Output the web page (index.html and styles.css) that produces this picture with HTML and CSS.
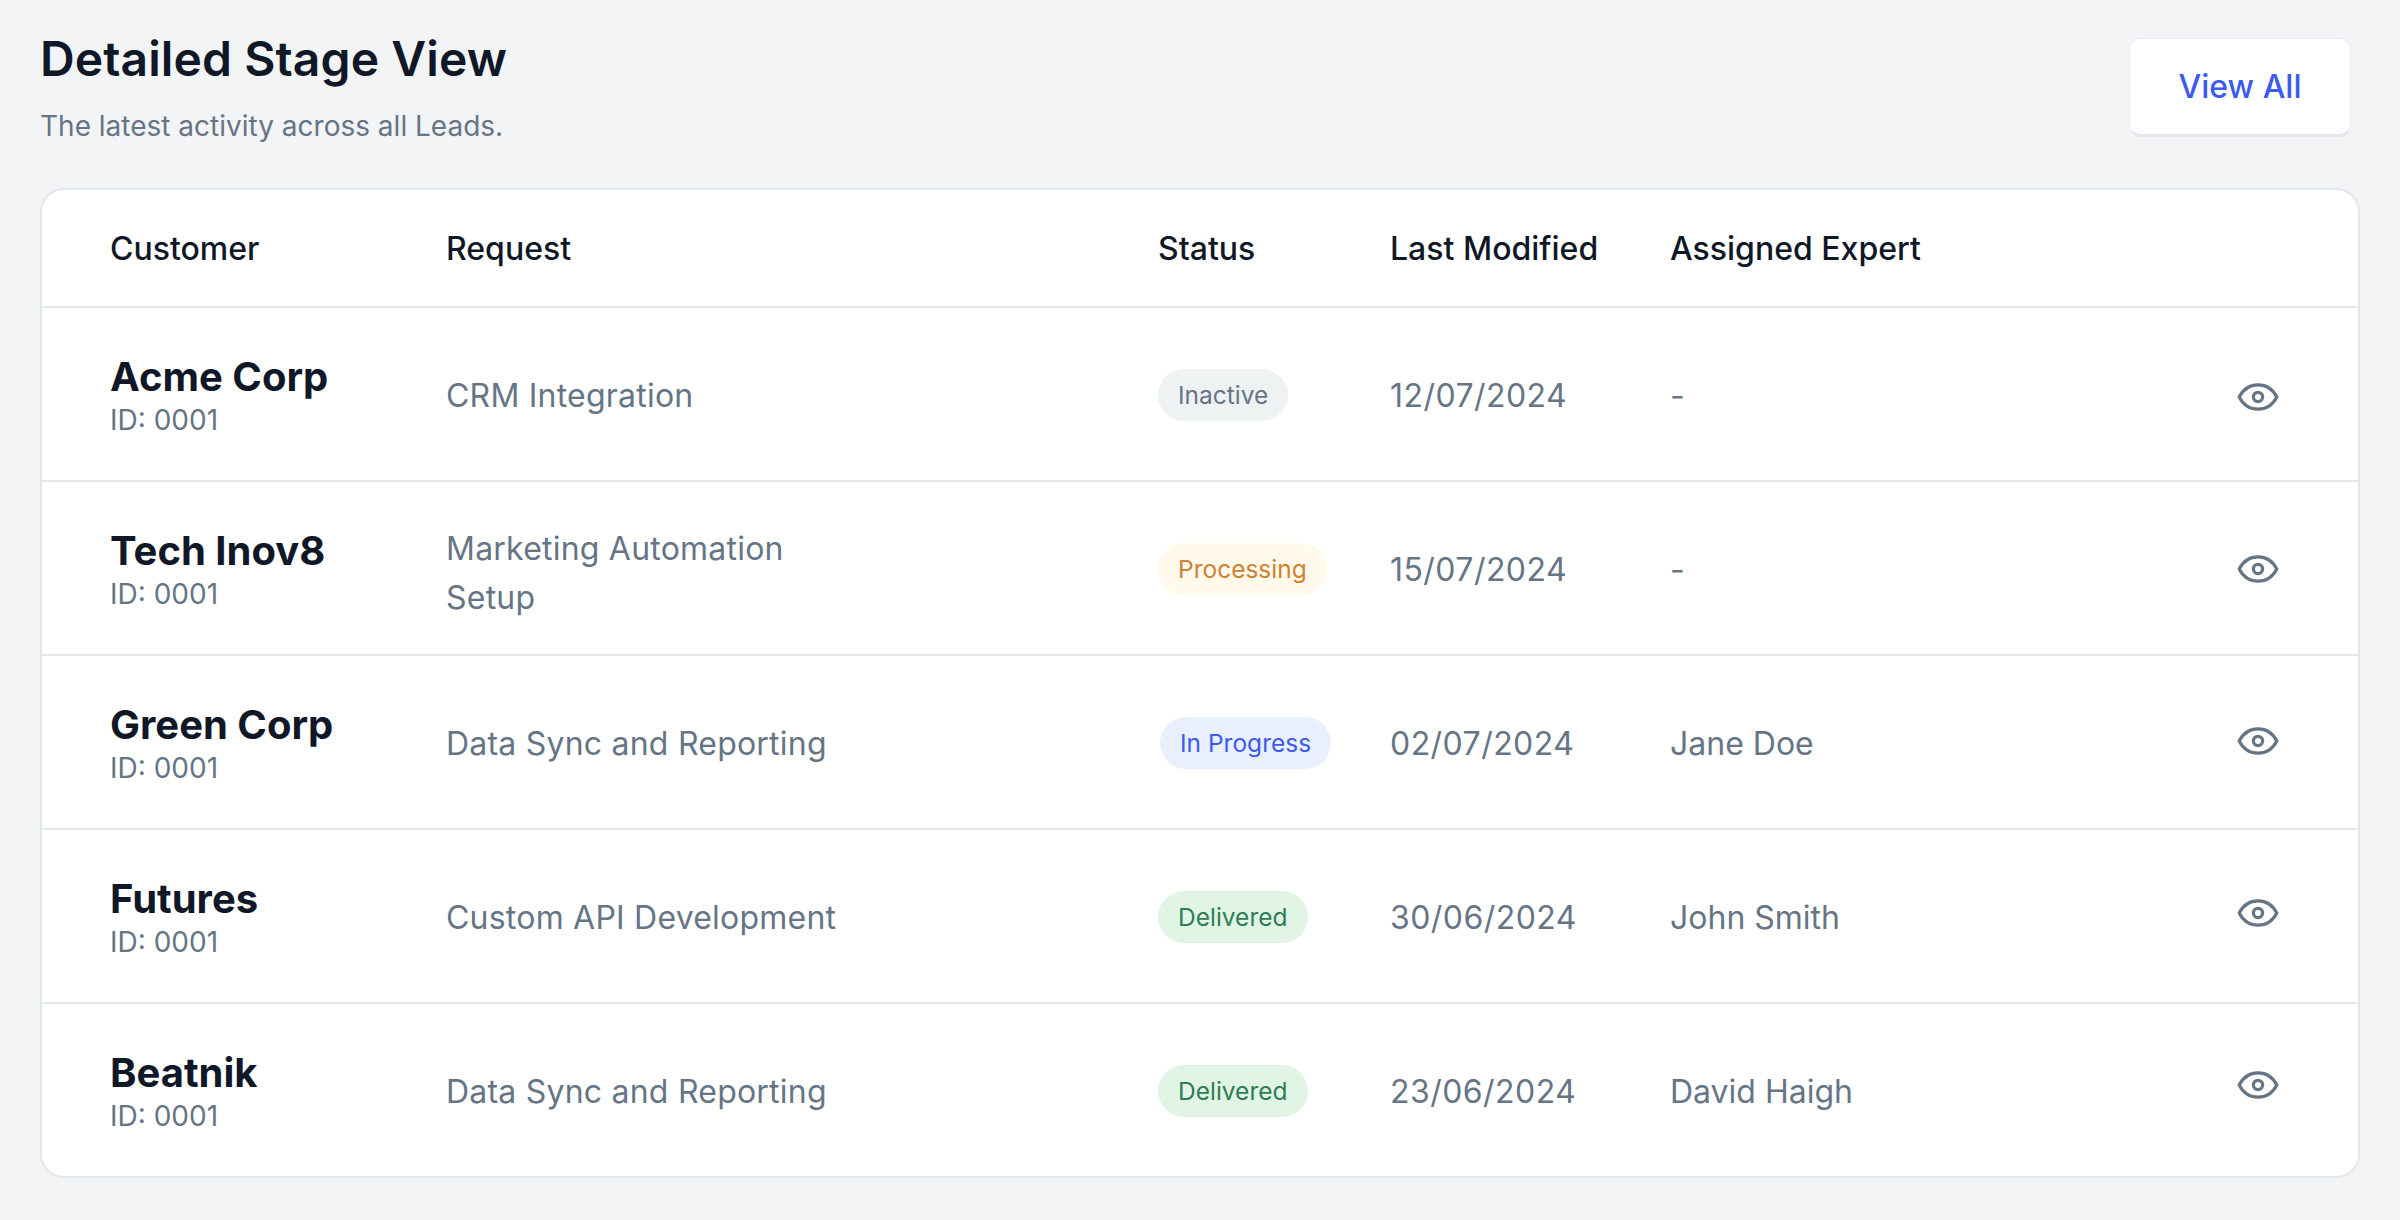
FILE: index.html
```html
<!DOCTYPE html>
<html lang="en">
<head>
    <meta charset="UTF-8">
    <title>Detailed Stage View</title>
    <link rel="stylesheet" href="styles.css">
</head>
<body>
    <div class="page-head">
        <div>
            <h2>Detailed Stage View</h2>
            <p>The latest activity across all Leads.</p>
        </div>
        <button type="button" class="view-all">View All</button>
    </div>

    <svg width="0" height="0" class="icon-defs">
        <symbol id="eye" viewBox="0 0 24 24">
            <path d="M2.6 12C4.6 8.1 8 5.9 12 5.9s7.4 2.2 9.4 6.1c-2 3.9-5.4 6.1-9.4 6.1S4.6 15.9 2.6 12z"/>
            <circle cx="12" cy="12" r="2.3"/>
        </symbol>
    </svg>

    <div class="card">
        <div class="row head">
            <div>Customer</div>
            <div>Request</div>
            <div>Status</div>
            <div>Last Modified</div>
            <div>Assigned Expert</div>
            <div></div>
        </div>

        <div class="row">
            <div><div class="name">Acme Corp</div><div class="id">ID: 0001</div></div>
            <div class="request">CRM Integration</div>
            <div class="status"><span class="badge inactive">Inactive</span></div>
            <div class="date">12/07/2024</div>
            <div>-</div>
            <div class="action"><svg class="eye"><use href="#eye"/></svg></div>
        </div>

        <div class="row">
            <div><div class="name">Tech Inov8</div><div class="id">ID: 0001</div></div>
            <div class="request two-lines">Marketing Automation<br>Setup</div>
            <div class="status"><span class="badge processing">Processing</span></div>
            <div class="date">15/07/2024</div>
            <div>-</div>
            <div class="action"><svg class="eye"><use href="#eye"/></svg></div>
        </div>

        <div class="row">
            <div><div class="name">Green Corp</div><div class="id">ID: 0001</div></div>
            <div class="request">Data Sync and Reporting</div>
            <div class="status"><span class="badge progress">In Progress</span></div>
            <div class="date">02/07/2024</div>
            <div>Jane Doe</div>
            <div class="action"><svg class="eye"><use href="#eye"/></svg></div>
        </div>

        <div class="row">
            <div><div class="name">Futures</div><div class="id">ID: 0001</div></div>
            <div class="request">Custom API Development</div>
            <div class="status"><span class="badge delivered">Delivered</span></div>
            <div class="date">30/06/2024</div>
            <div>John Smith</div>
            <div class="action"><svg class="eye"><use href="#eye"/></svg></div>
        </div>

        <div class="row">
            <div><div class="name">Beatnik</div><div class="id">ID: 0001</div></div>
            <div class="request">Data Sync and Reporting</div>
            <div class="status"><span class="badge delivered">Delivered</span></div>
            <div class="date">23/06/2024</div>
            <div>David Haigh</div>
            <div class="action"><svg class="eye"><use href="#eye"/></svg></div>
        </div>
    </div>
</body>
</html>
```

FILE: styles.css
```css
body {
    margin: 0;
    padding: 32px 40px 0;
    height: 1220px;
    box-sizing: border-box;
    overflow: hidden;
    font-family: Inter, sans-serif;
    font-optical-sizing: none;
    background-color: #f3f4f6;
    color: #667585;
}
.page-head {
    display: flex;
    justify-content: space-between;
    align-items: flex-start;
    height: 156px;
}
.page-head h2 {
    margin: 0;
    font-size: 48px;
    line-height: 54px;
    font-weight: 600;
    letter-spacing: 0.1px;
    color: #101828;
}
.page-head p {
    margin: 23px 0 0;
    font-size: 28px;
    line-height: 34px;
}
.view-all {
    width: 222px;
    height: 99px;
    margin: 6px 9px 0 0;
    background-color: white;
    border: 1px solid #eaedf2;
    border-bottom: 3px solid #e2e7ee;
    border-radius: 12px;
    font-family: inherit;
    font-size: 32px;
    font-weight: 500;
    color: #3b5bf0;
}
.icon-defs {
    position: absolute;
}
.card {
    width: 2320px;
    box-sizing: border-box;
    background: white;
    border: 2px solid #e2e7ee;
    border-radius: 24px;
    overflow: hidden;
}
.row {
    display: grid;
    grid-template-columns: 336px 712px 232px 280px 1fr 124px;
    align-items: center;
    height: 174px;
    box-sizing: border-box;
    padding: 3px 0 0 68px;
    border-top: 2px solid #e2e7ee;
    font-size: 32px;
    line-height: 48px;
}
.row.head {
    height: 116px;
    padding-top: 2px;
    border-top: none;
    font-weight: 500;
    color: #101828;
}
.name {
    font-size: 40px;
    line-height: 48px;
    font-weight: 700;
    color: #101828;
}
.id {
    font-size: 28px;
    line-height: 38px;
}
.request {
    letter-spacing: 0.22px;
}
.two-lines {
    margin-top: 6px;
    line-height: 49px;
}
.date {
    letter-spacing: 0.45px;
}
.status {
    margin-bottom: 1px;
}
.badge {
    display: inline-block;
    padding: 0 20px;
    border-radius: 26px;
    font-size: 24.5px;
    line-height: 52px;
}
.inactive {
    background-color: #eff2f3;
}
.processing {
    background-color: #fffaeb;
    color: #d0812f;
}
.progress {
    margin-left: 2px;
    background-color: #e9effd;
    color: #3b5bf0;
}
.delivered {
    background-color: #e0f5e6;
    color: #2f7d50;
}
.action {
    display: flex;
    margin-bottom: 3px;
}
/* icons in the source drift up a little on each row */
.row:nth-child(2) .eye { margin-top: 6px; }
.row:nth-child(3) .eye { margin-top: 2px; }
.row:nth-child(4) .eye { margin-top: -2px; }
.row:nth-child(5) .eye { margin-top: -6px; }
.row:nth-child(6) .eye { margin-top: -10px; }
.eye {
    width: 48px;
    height: 48px;
    fill: none;
    stroke: #667585;
    stroke-width: 1.6;
}
```
